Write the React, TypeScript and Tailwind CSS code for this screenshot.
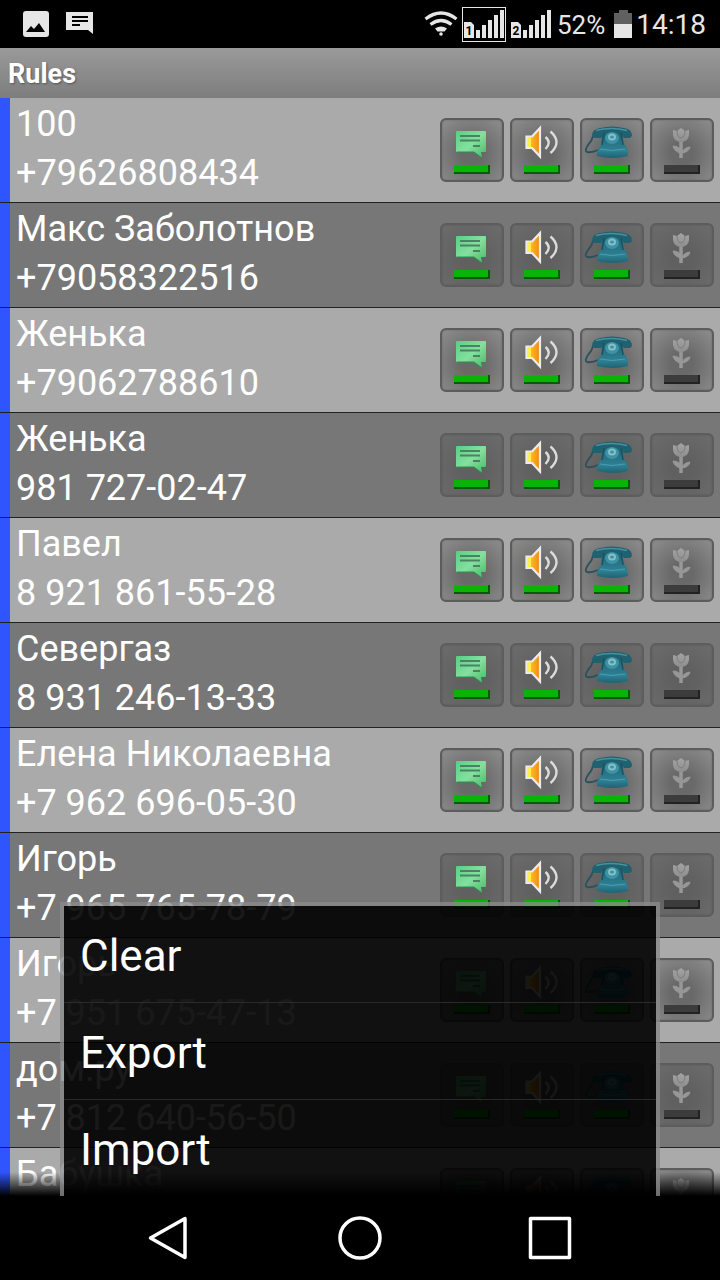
import React from "react";

type Rule = { name: string; phone: string };

const rules: Rule[] = [
  { name: "100", phone: "+79626808434" },
  { name: "Макс Заболотнов", phone: "+79058322516" },
  { name: "Женька", phone: "+79062788610" },
  { name: "Женька", phone: "981 727-02-47" },
  { name: "Павел", phone: "8 921 861-55-28" },
  { name: "Севергаз", phone: "8 931 246-13-33" },
  { name: "Елена Николаевна", phone: "+7 962 696-05-30" },
  { name: "Игорь", phone: "+7 965 765-78-79" },
  { name: "Игорь", phone: "+7 951 675-47-13" },
  { name: "дом.ру", phone: "+7 812 640-56-50" },
  { name: "Бабушка", phone: "" },
];

function Gradients() {
  return (
    <svg width="0" height="0" className="absolute" aria-hidden="true">
      <defs>
        <linearGradient id="bubble" x1="0" y1="0" x2="1" y2="1">
          <stop offset="0" stopColor="#57cf84" />
          <stop offset="0.5" stopColor="#84e09f" />
          <stop offset="1" stopColor="#45b964" />
        </linearGradient>
        <linearGradient id="horn" x1="0" y1="0" x2="1" y2="0">
          <stop offset="0" stopColor="#ffe03c" />
          <stop offset="0.45" stopColor="#ffb01c" />
          <stop offset="1" stopColor="#e88a18" />
        </linearGradient>
        <linearGradient id="phone" x1="0" y1="0" x2="0" y2="1">
          <stop offset="0" stopColor="#1f6474" />
          <stop offset="0.7" stopColor="#2f8093" />
          <stop offset="1" stopColor="#1f6273" />
        </linearGradient>
        <linearGradient id="petal" x1="0" y1="0" x2="0" y2="1">
          <stop offset="0" stopColor="#a4a4a4" />
          <stop offset="1" stopColor="#8e8e8e" />
        </linearGradient>
      </defs>
    </svg>
  );
}

function MessageIcon() {
  return (
    <svg viewBox="2 2 60 42" className="block h-[42px] w-full" aria-hidden="true">
      <path d="M17 13h28q1 0 1 1v19q0 1-1 1h-4l1 6-8-6H17q-1 0-1-1V14q0-1 1-1z" fill="url(#bubble)" />
      <path d="M17 34h17l8 6" stroke="#2c8f4b" fill="none" />
      <path d="M20 18h20M20 22.500h20M33 28h7" stroke="#4a8262" strokeWidth="1.800" />
    </svg>
  );
}

function SoundIcon() {
  return (
    <svg viewBox="2 2 60 42" className="block h-[42px] w-full" aria-hidden="true">
      <path d="M16.500 18.500h5.500l8-8.500v28.500l-8-8.500h-5.500z" fill="url(#horn)" stroke="#ececec" strokeWidth="2.200" />
      <path d="M17.500 19.500h3.500v9.500h-3.500z" fill="#ffee50" />
      <path d="M35.500 19q6.500 5.500 0 12M40.500 13.500q12 10.500 0 21.500" stroke="#dcdcdc" strokeWidth="2.400" fill="none" />
    </svg>
  );
}

function PhoneIcon() {
  return (
    <svg viewBox="2 2 60 42" className="block h-[42px] w-full" aria-hidden="true">
      <path d="M13 18q-1 5-5 9-4 6-1 7 5 1 11-2" stroke="#2b525c" strokeWidth="1.800" fill="none" />
      <path d="M22 15h20l2 11q4 3 4 12-15 4-31 0 0-7 4-11z" fill="url(#phone)" />
      <path d="M12 18q0-7 8-8 12-3 24 0 8 1 8 8l-2 2h-6l-4-5H25l-4 5h-7z" fill="#20616f" />
      <path d="M16 12.500q15-4 31 0" stroke="#4690a0" strokeWidth="1.600" fill="none" />
      <path d="M24 15l-2 12M41 15l2 12" stroke="#1a5261" strokeWidth="1.500" />
      <ellipse cx="32" cy="20" rx="7" ry="6" fill="#3d93a5" />
      <ellipse cx="32" cy="19" rx="4" ry="3.500" fill="#83c0c9" />
      <ellipse cx="32" cy="19" rx="2" ry="1.500" fill="#458f9d" />
      <path d="M20 31q12 3 25 0" stroke="#46a0b3" fill="none" />
    </svg>
  );
}

function FlowerIcon() {
  return (
    <svg viewBox="2 2 60 42" className="block h-[42px] w-full" aria-hidden="true">
      <path d="M31 23v17" stroke="#989898" strokeWidth="3.500" />
      <path d="M30 35q-6-2-7-7 6 0 8 5zM32 35q1-5 8-6-1 5-8 6z" fill="#979797" stroke="#979797" />
      <path d="M23 12l4 1 4-3 4 3 4-1v5q-1 7-8 7t-8-7z" fill="url(#petal)" />
      <path d="M27 13q0 6 4 7 4-1 4-7" stroke="#7d7d7d" strokeWidth="1" fill="none" />
    </svg>
  );
}

const toggles = [
  { label: "Messages", Icon: MessageIcon, on: true },
  { label: "Sound", Icon: SoundIcon, on: true },
  { label: "Calls", Icon: PhoneIcon, on: true },
  { label: "Picture", Icon: FlowerIcon, on: false },
];

function RuleRow({ rule, light }: { rule: Rule; light: boolean }) {
  return (
    <li className="flex items-stretch border-b border-[#222] bg-[#2f55ff] pl-[10px]">
      <div className={`flex min-w-0 flex-1 items-center pr-[6px] pl-[6px] ${light ? "bg-[#aaaaaa]" : "bg-[#777777]"}`}>
        <div className="min-w-0 flex-1 pt-[2px] pb-1 text-[36px] leading-[49px] whitespace-nowrap">
          <p className="h-[49px]">{rule.name}</p>
          <p className="h-[49px]">{rule.phone}</p>
        </div>
        <div className="flex shrink-0 gap-[6px]">
          {toggles.map(({ label, Icon, on }) => (
            <button
              key={label}
              type="button"
              aria-label={label}
              aria-pressed={on}
              className={`flex size-16 flex-col items-center rounded-[6px] border-2 ${
                light
                  ? "border-[#5c5c5c] bg-[radial-gradient(circle_at_50%_55%,#696969_25%,#8e8e8e_100%)] shadow-[inset_0_0_2px_#666]"
                  : "border-[#5d5d5d] bg-[radial-gradient(circle_at_50%_55%,#606060_25%,#6c6c6c_100%)] shadow-[inset_0_0_2px_#585858]"
              }`}
            >
              <Icon />
              <span
                className={`mt-[3px] h-[9px] w-9 border-r-2 border-b-2 ${
                  on ? "border-[#08590a] bg-[#08b408]" : "border-[#222] bg-[#3c3c3c]"
                }`}
              />
            </button>
          ))}
        </div>
      </div>
    </li>
  );
}

function Signal({ sim }: { sim: string }) {
  return (
    <svg viewBox="0 0 40 28" className="block h-7 w-10" aria-hidden="true">
      <path d="M0 12h7l3 3v13H0z" fill="#e6e6e6" />
      <text x="5" y="25" textAnchor="middle" fontSize="12" fontWeight="bold" fontFamily="Roboto, sans-serif" fill="#000">
        {sim}
      </text>
      <path d="M12 20h4v8h-4zM18 15h4v13h-4zM24 10h4v18h-4zM30 5h4v23h-4zM36 0h4v28h-4z" fill="#e6e6e6" />
    </svg>
  );
}

function StatusBar() {
  return (
    <header className="flex h-12 shrink-0 items-center justify-between bg-black pr-[14px] pl-[23px] text-[#e6e6e6]">
      <div className="flex items-center gap-[17px]">
        <svg viewBox="0 0 26 26" className="size-[26px]" aria-hidden="true">
          <rect width="26" height="26" rx="3" fill="#e6e6e6" />
          <path d="M3 21l5-6 3 3 5-6 6 9z" fill="#000" />
        </svg>
        <svg viewBox="0 0 27 24" className="h-6 w-[27px]" aria-hidden="true">
          <path d="M0 0h27v22l-5-4H0z" fill="#e6e6e6" />
          <path d="M6 5h16M6 9h16M6 13h8" stroke="#000" strokeWidth="2" />
        </svg>
      </div>
      <div className="flex items-center">
        <svg viewBox="0 0 34 26" className="mr-1 h-[26px] w-[34px]" aria-hidden="true">
          <path d="M1.500 8q15.500-12 31 0M6.500 13.500q10.500-8 21 0" stroke="#e6e6e6" strokeWidth="3.200" fill="none" />
          <path d="M11 17.500q6-4 12 0l-2.500 3h-7z" fill="#e6e6e6" />
          <circle cx="17" cy="23" r="1.800" fill="#e6e6e6" />
        </svg>
        <span className="flex h-[35px] w-11 items-center justify-center border border-[#e6e6e6]">
          <Signal sim="1" />
        </span>
        <span className="mr-[6px] ml-[5px]">
          <Signal sim="2" />
        </span>
        <span className="pt-[2px] text-[26px] leading-[48px]">52%</span>
        <svg viewBox="0 0 18 28" className="mr-1 ml-[9px] h-7 w-[18px]" aria-hidden="true">
          <path d="M5 0h9v3h4v11H0V3h5z" fill="#606060" />
          <path d="M0 14h18v14H0z" fill="#e6e6e6" />
        </svg>
        <span className="pt-[2px] text-[28px] leading-[48px]">14:18</span>
      </div>
    </header>
  );
}

function NavBar() {
  return (
    <nav className="flex h-[84px] shrink-0 items-center justify-center gap-[146px] bg-black">
      <button type="button" aria-label="Back" className="size-11">
        <svg viewBox="0 0 44 44" className="block size-11" fill="none" stroke="#fff" strokeWidth="3.500" strokeLinejoin="round">
          <path d="M37 2.500v39L2.500 22z" />
        </svg>
      </button>
      <button type="button" aria-label="Home" className="size-11">
        <svg viewBox="0 0 44 44" className="block size-11" fill="none" stroke="#fff" strokeWidth="3.500">
          <circle cx="22" cy="22" r="20" />
        </svg>
      </button>
      <button type="button" aria-label="Recent apps" className="size-11">
        <svg viewBox="0 0 44 44" className="block size-11" fill="none" stroke="#fff" strokeWidth="3.500" strokeLinejoin="round">
          <path d="M2.500 2.500h39v39h-39z" />
        </svg>
      </button>
    </nav>
  );
}

export default function App() {
  return (
    <div className="flex h-screen flex-col overflow-hidden bg-black font-[Roboto,sans-serif] text-white">
      <Gradients />
      <StatusBar />
      <h1 className="h-[50px] shrink-0 bg-linear-to-b from-[#9a9a9a] to-[#7d7d7d] px-2 text-[27px] leading-[52px] font-bold [text-shadow:1px_1px_2px_#555]">
        Rules
      </h1>
      <main className="relative min-h-0 flex-1 overflow-hidden">
        <ul>
          {rules.map((rule, i) => (
            <RuleRow key={i} rule={rule} light={i % 2 === 0} />
          ))}
        </ul>
        <div className="absolute inset-x-0 bottom-0 h-6 bg-linear-to-b from-transparent to-black" />
        <div
          role="menu"
          className="absolute inset-x-[60px] bottom-0 border-x-4 border-t-4 border-[#8a8a8a]/80 bg-black/90 bg-clip-padding"
        >
          {["Clear", "Export", "Import"].map((item) => (
            <button
              key={item}
              type="button"
              role="menuitem"
              className="block h-[97px] w-full border-b border-[#2a2a2a] px-4 pt-1 text-left text-[44px] last:h-24 last:border-b-0"
            >
              {item}
            </button>
          ))}
        </div>
      </main>
      <NavBar />
    </div>
  );
}
